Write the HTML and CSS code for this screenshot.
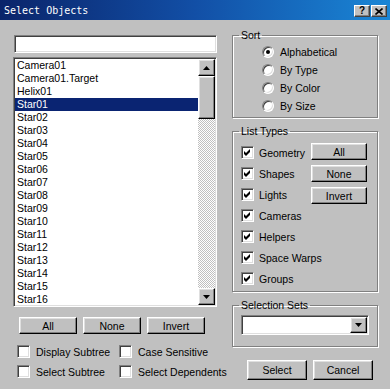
FILE: index.html
```html
<!DOCTYPE html>
<html lang="en">
<head>
  <meta charset="UTF-8">
  <meta name="viewport" content="width=device-width, initial-scale=1.0">
  <title>Select Objects</title>
  <link rel="stylesheet" href="styles.css">
</head>
<body>
  <div class="titlebar">
    <span class="title">Select Objects</span>
    <div class="title-buttons">
      <span class="tbtn help">?</span>
      <span class="tbtn">
        <svg width="8" height="7" viewBox="0 0 8 7"><path d="M0.5 0.5 L7.5 6.5 M7.5 0.5 L0.5 6.5" stroke="#000" stroke-width="1.6"/></svg>
      </span>
    </div>
  </div>

  <div class="content">
    <div class="left">
      <div class="field name-field"></div>

      <div class="listbox">
        <ul class="items">
          <li>Camera01</li>
          <li>Camera01.Target</li>
          <li>Helix01</li>
          <li class="selected">Star01</li>
          <li>Star02</li>
          <li>Star03</li>
          <li>Star04</li>
          <li>Star05</li>
          <li>Star06</li>
          <li>Star07</li>
          <li>Star08</li>
          <li>Star09</li>
          <li>Star10</li>
          <li>Star11</li>
          <li>Star12</li>
          <li>Star13</li>
          <li>Star14</li>
          <li>Star15</li>
          <li>Star16</li>
        </ul>
        <div class="scrollbar">
          <div class="sbtn"><svg width="7" height="4" viewBox="0 0 7 4"><path d="M3.5 0 L7 4 L0 4 Z" fill="#000"/></svg></div>
          <div class="thumb"></div>
          <div class="track"></div>
          <div class="sbtn"><svg width="7" height="4" viewBox="0 0 7 4"><path d="M0 0 L7 0 L3.5 4 Z" fill="#000"/></svg></div>
        </div>
      </div>

      <div class="btn-row">
        <button class="btn">All</button>
        <button class="btn">None</button>
        <button class="btn">Invert</button>
      </div>

      <div class="options">
        <label class="check"><span class="box"></span>Display Subtree</label>
        <label class="check"><span class="box"></span>Case Sensitive</label>
        <label class="check"><span class="box"></span>Select Subtree</label>
        <label class="check"><span class="box"></span>Select Dependents</label>
      </div>
    </div>

    <div class="right">
      <fieldset class="group sort">
        <legend>Sort</legend>
        <div class="radio-list">
          <div class="radio-row"><span class="radio checked"></span>Alphabetical</div>
          <div class="radio-row"><span class="radio"></span>By Type</div>
          <div class="radio-row"><span class="radio"></span>By Color</div>
          <div class="radio-row"><span class="radio"></span>By Size</div>
        </div>
      </fieldset>

      <fieldset class="group types">
        <legend>List Types</legend>
        <div class="types-body">
          <div class="type-list">
            <label class="check type"><span class="box on"><svg width="9" height="9" viewBox="0 0 9 9"><path d="M1 3 L3 5 L7 1 L7 4 L3 8 L1 6 Z" fill="#000"/></svg></span>Geometry</label>
            <label class="check type"><span class="box on"><svg width="9" height="9" viewBox="0 0 9 9"><path d="M1 3 L3 5 L7 1 L7 4 L3 8 L1 6 Z" fill="#000"/></svg></span>Shapes</label>
            <label class="check type"><span class="box on"><svg width="9" height="9" viewBox="0 0 9 9"><path d="M1 3 L3 5 L7 1 L7 4 L3 8 L1 6 Z" fill="#000"/></svg></span>Lights</label>
            <label class="check type"><span class="box on"><svg width="9" height="9" viewBox="0 0 9 9"><path d="M1 3 L3 5 L7 1 L7 4 L3 8 L1 6 Z" fill="#000"/></svg></span>Cameras</label>
            <label class="check type"><span class="box on"><svg width="9" height="9" viewBox="0 0 9 9"><path d="M1 3 L3 5 L7 1 L7 4 L3 8 L1 6 Z" fill="#000"/></svg></span>Helpers</label>
            <label class="check type"><span class="box on"><svg width="9" height="9" viewBox="0 0 9 9"><path d="M1 3 L3 5 L7 1 L7 4 L3 8 L1 6 Z" fill="#000"/></svg></span>Space Warps</label>
            <label class="check type"><span class="box on"><svg width="9" height="9" viewBox="0 0 9 9"><path d="M1 3 L3 5 L7 1 L7 4 L3 8 L1 6 Z" fill="#000"/></svg></span>Groups</label>
          </div>
          <div class="type-buttons">
            <button class="btn small">All</button>
            <button class="btn small">None</button>
            <button class="btn small">Invert</button>
          </div>
        </div>
      </fieldset>

      <fieldset class="group sets">
        <legend>Selection Sets</legend>
        <div class="field combo">
          <div class="sbtn drop"><svg width="7" height="4" viewBox="0 0 7 4"><path d="M0 0 L7 0 L3.5 4 Z" fill="#000"/></svg></div>
        </div>
      </fieldset>

      <div class="dlg-buttons">
        <button class="btn wide">Select</button>
        <button class="btn wide">Cancel</button>
      </div>
    </div>
  </div>
</body>
</html>
```

FILE: styles.css
```css
body {
  margin: 0;
  width: 390px;
  height: 389px;
  overflow: hidden;
  background-color: #c0c0c0;
  font-family: "Liberation Sans", Arial, sans-serif;
  font-size: 10.5px;
  color: #000000;
}

/* title bar */
.titlebar {
  height: 20px;
  display: flex;
  justify-content: space-between;
  align-items: flex-start;
  background: linear-gradient(to right, #0a246a 0%, #124fa6 50%, #1a86d6 100%);
}

.title {
  margin: 5px 0 0 4px;
  font-family: "DejaVu Sans Mono", monospace;
  font-size: 10px;
  line-height: 12px;
  color: #ffffff;
}

.title-buttons {
  display: flex;
  gap: 1px;
  margin: 5px 3px 0 0;
}

.tbtn {
  width: 16px;
  height: 12px;
  box-sizing: border-box;
  display: flex;
  align-items: center;
  justify-content: center;
  background: #c0c0c0;
  border: 1px solid;
  border-color: #ffffff #404040 #404040 #ffffff;
  box-shadow: inset -1px -1px 0 #808080;
}

.tbtn.help {
  font-weight: bold;
  font-size: 10px;
  line-height: 10px;
}

/* shared bevels */
.field {
  box-sizing: border-box;
  background: #ffffff;
  border: 1px solid;
  border-color: #808080 #ffffff #ffffff #808080;
  box-shadow: inset 1px 1px 0 #404040, inset -1px -1px 0 #dfdfdf;
}

.btn,
.sbtn,
.thumb {
  box-sizing: border-box;
  background: #c0c0c0;
  border: 1px solid;
  border-color: #ffffff #000000 #000000 #ffffff;
  box-shadow: inset -1px -1px 0 #808080, inset 1px 1px 0 #dfdfdf;
}

.btn {
  height: 17px;
  width: 58px;
  padding: 0;
  font-family: inherit;
  font-size: 10.5px;
  color: #000000;
}

/* layout */
.content {
  display: flex;
  gap: 15px;
  padding: 9px 0 0 13px;
}

.left {
  width: 204px;
  padding-top: 6px;
}

.right {
  width: 146px;
}

/* left column */
.name-field {
  height: 18px;
  margin-left: 1px;
}

.listbox {
  margin-top: 4px;
  height: 250px;
  box-sizing: border-box;
  padding: 1px;
  display: flex;
  overflow: hidden;
  background: #ffffff;
  border: 1px solid;
  border-color: #808080 #ffffff #ffffff #808080;
  box-shadow: inset 1px 1px 0 #404040, inset -1px -1px 0 #dfdfdf;
}

.items {
  flex: 1;
  list-style: none;
  margin: 0;
  padding: 0;
}

.items li {
  height: 13px;
  line-height: 13px;
  padding-left: 2px;
  white-space: nowrap;
}

.items li.selected {
  background: #0a2472;
  color: #ffffff;
}

.scrollbar {
  width: 17px;
  display: flex;
  flex-direction: column;
}

.sbtn {
  height: 17px;
  flex: none;
  display: flex;
  align-items: center;
  justify-content: center;
}

.thumb {
  height: 43px;
  flex: none;
}

.track {
  flex: 1;
  background: repeating-conic-gradient(#c0c0c0 0 25%, #ffffff 0 50%) 0 0 / 2px 2px;
}

.btn-row {
  display: flex;
  gap: 6px;
  margin-top: 10px;
  padding-left: 6px;
}

.options {
  display: grid;
  grid-template-columns: 102px auto;
  row-gap: 7px;
  margin-top: 11px;
  padding-left: 4px;
}

.check {
  display: flex;
  align-items: center;
  gap: 6px;
  height: 13px;
  white-space: nowrap;
}

.box {
  width: 13px;
  height: 13px;
  flex: none;
  box-sizing: border-box;
  display: flex;
  align-items: center;
  justify-content: center;
  background: #ffffff;
  border: 1px solid;
  border-color: #808080 #ffffff #ffffff #808080;
  box-shadow: inset 1px 1px 0 #404040, inset -1px -1px 0 #dfdfdf;
}

/* right column */
.group {
  margin: 0;
  padding: 0 8px 2px 6px;
  min-width: 0;
  border: 1px solid #808080;
  box-shadow: inset 1px 1px 0 #ffffff, 1px 1px 0 #ffffff;
}

.group legend {
  padding: 0 2px;
  line-height: 13px;
}

.sort {
  margin-bottom: 7px;
}

.radio-list {
  padding: 1px 0 0 23px;
}

.radio-row {
  height: 18px;
  display: flex;
  align-items: center;
  gap: 6px;
}

.radio {
  width: 12px;
  height: 12px;
  box-sizing: border-box;
  position: relative;
  border-radius: 50%;
  background: #ffffff;
  border: 1px solid;
  border-color: #808080 #ffffff #ffffff #808080;
  box-shadow: inset 1px 1px 0 #404040, inset -1px -1px 0 #dfdfdf;
}

.radio.checked::after {
  content: "";
  position: absolute;
  left: 3px;
  top: 3px;
  width: 4px;
  height: 4px;
  border-radius: 50%;
  background: #000000;
}

.types {
  margin-bottom: 7px;
}

.types-body {
  display: flex;
  padding-top: 4px;
}

.type-list {
  flex: 1;
  min-width: 0;
  padding-left: 2px;
}

.check.type {
  height: 21px;
  gap: 5px;
}

.type-buttons {
  flex: none;
  display: flex;
  flex-direction: column;
  gap: 5px;
  margin: 1px 2px 0 0;
}

.btn.small {
  width: 56px;
}

.combo {
  height: 20px;
  margin: 3px 0 9px 2px;
  padding: 1px;
  display: flex;
  justify-content: flex-end;
}

.sbtn.drop {
  width: 17px;
  height: 16px;
}

.dlg-buttons {
  display: flex;
  gap: 6px;
  margin-top: 13px;
  padding-left: 15px;
}

.btn.wide {
  width: 60px;
  height: 20px;
}
```
